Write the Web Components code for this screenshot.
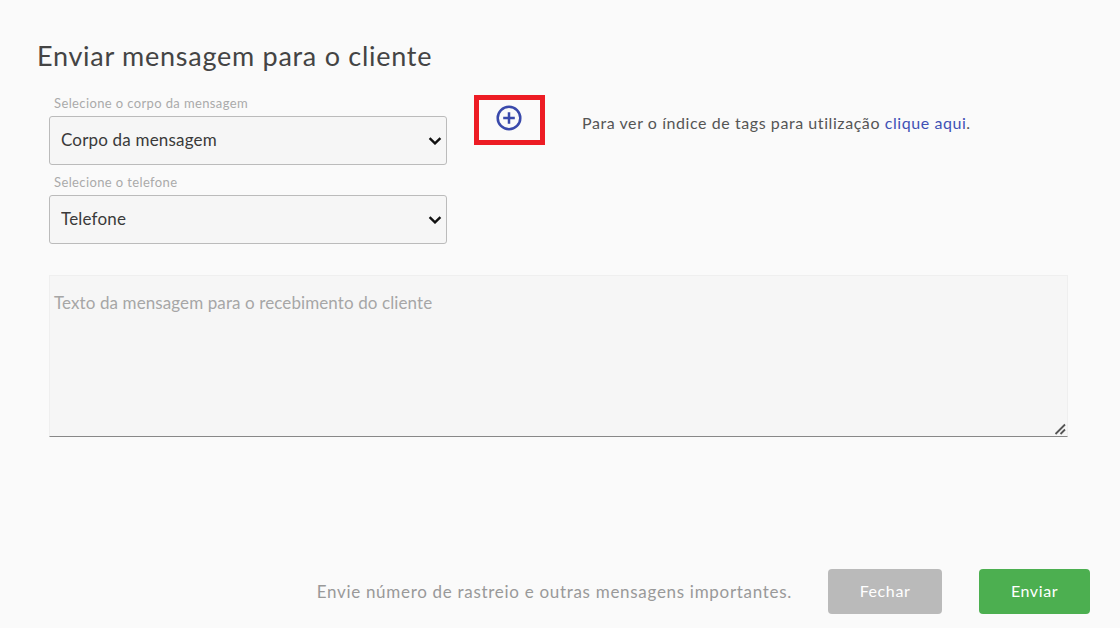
<!DOCTYPE html>
<html lang="pt">
<head>
<meta charset="utf-8">
<title>Enviar mensagem</title>
<style>
html, body { margin: 0; height: 100%; background: #fafafa; overflow: hidden; }
body { font-family: Lato, "Noto Sans", sans-serif; }
a { color: #3f51b5; text-decoration: none; }
</style>
</head>
<body>
<send-message-dialog>
  <span slot="title">Enviar mensagem para o cliente</span>
  <labeled-select slot="selects" label="Selecione o corpo da mensagem" value="Corpo da mensagem"></labeled-select>
  <labeled-select slot="selects" label="Selecione o telefone" value="Telefone"></labeled-select>
  <add-button slot="add"></add-button>
  <span slot="hint">Para ver o índice de tags para utilização <a href="#">clique aqui</a>.</span>
  <span slot="note">Envie número de rastreio e outras mensagens importantes.</span>
  <action-button slot="actions" kind="close">Fechar</action-button>
  <action-button slot="actions" kind="send">Enviar</action-button>
</send-message-dialog>

<script>
class LabeledSelect extends HTMLElement {
    constructor() {
        super();
        this.attachShadow({mode: 'open'});
    }

    connectedCallback(){
        this.shadowRoot.innerHTML = `
        <style>
        :host { display: block; }
        label {
            display: block;
            height: 21px;
            line-height: 17px;
            padding-left: 5px;
            font-size: 13px;
            letter-spacing: .38px;
            color: #aaa;
        }
        .box { position: relative; }
        select {
            display: block;
            box-sizing: border-box;
            width: 398px;
            height: 49px;
            padding: 0 11px 2px;
            font: 17px Lato, "Noto Sans", sans-serif;
            letter-spacing: .18px;
            color: #3a3a3a;
            background-color: #f6f6f6;
            border: 1px solid #bbb;
            border-radius: 3px;
            appearance: none;
            outline: none;
        }
        svg {
            position: absolute;
            top: 21px;
            right: 5px;
            pointer-events: none;
        }
        </style>
        <label>${this.getAttribute('label')}</label>
        <div class="box">
            <select><option>${this.getAttribute('value')}</option></select>
            <svg width="14" height="8" viewBox="0 0 14 8" fill="none" stroke="#111" stroke-width="2.4">
                <path d="M1.6 1.2L7 6.4l5.4-5.2"/>
            </svg>
        </div>
        `;
    }
}
customElements.define('labeled-select', LabeledSelect);

class AddButton extends HTMLElement {
    constructor() {
        super();
        this.attachShadow({mode: 'open'});
    }

    connectedCallback(){
        this.shadowRoot.innerHTML = `
        <style>
        :host {
            display: flex;
            justify-content: center;
            box-sizing: border-box;
            width: 71px;
            height: 50px;
            padding: 5px 1px 0 0;
            border: 5px solid #ed1c24;
        }
        svg { display: block; }
        </style>
        <svg width="26" height="26" viewBox="0 0 26 26" fill="none" stroke="#3949ab" stroke-width="2.5">
            <circle cx="13" cy="13" r="11.3"/>
            <path d="M13 7.2v11.6M7.2 13h11.6"/>
        </svg>
        `;
    }
}
customElements.define('add-button', AddButton);

class ActionButton extends HTMLElement {
    constructor() {
        super();
        this.attachShadow({mode: 'open'});
    }

    connectedCallback(){
        this.shadowRoot.innerHTML = `
        <style>
        :host { display: block; }
        button {
            display: block;
            height: 45px;
            padding: 0 0 2px;
            border: none;
            border-radius: 4px;
            color: #fff;
            font: 16px Lato, "Noto Sans", sans-serif;
            letter-spacing: .6px;
        }
        :host([kind="close"]) button { width: 114px; background: #bababa; }
        :host([kind="send"]) button { width: 111px; background: #4caf50; }
        </style>
        <button><slot></slot></button>
        `;
    }
}
customElements.define('action-button', ActionButton);

class SendMessageDialog extends HTMLElement {
    constructor() {
        super();
        this.attachShadow({mode: 'open'});
    }

    connectedCallback(){
        this.shadowRoot.innerHTML = `
        <style>
        :host {
            display: block;
            box-sizing: border-box;
            height: 628px;
            padding-top: 38px;
            color: #444;
        }
        h2 {
            margin: 0 0 0 37px;
            height: 57px;
            font-size: 27px;
            line-height: 35px;
            font-weight: 400;
            letter-spacing: .73px;
            color: #444;
        }
        .top {
            display: flex;
            padding-left: 49px;
        }
        .selects {
            display: flex;
            flex-direction: column;
            gap: 9px;
            width: 398px;
        }
        .add { margin-left: 27px; }
        .hint {
            margin-left: 37px;
            padding-top: 18px;
            font-size: 16px;
            line-height: 20px;
            letter-spacing: .57px;
            color: #555;
        }
        .message {
            position: relative;
            width: 1019px;
            margin: 31px 0 0 49px;
        }
        textarea {
            display: block;
            box-sizing: border-box;
            width: 100%;
            height: 162px;
            padding: 16px 4px;
            font: 17px Lato, "Noto Sans", sans-serif;
            letter-spacing: .1px;
            background: #f6f6f6;
            border: 1px solid #efefef;
            border-bottom: 1px solid #888;
            outline: none;
            resize: none;
        }
        textarea::placeholder { color: #a6a6a6; }
        .grip {
            position: absolute;
            right: 2px;
            bottom: 2px;
            pointer-events: none;
        }
        footer {
            display: flex;
            align-items: center;
            justify-content: flex-end;
            margin-top: 132px;
            padding-right: 30px;
        }
        .note {
            margin-right: 36px;
            font-size: 17px;
            letter-spacing: .7px;
            color: #999;
        }
        .actions {
            display: flex;
            gap: 37px;
        }
        </style>
        <h2><slot name="title"></slot></h2>
        <div class="top">
            <div class="selects"><slot name="selects"></slot></div>
            <div class="add"><slot name="add"></slot></div>
            <div class="hint"><slot name="hint"></slot></div>
        </div>
        <div class="message">
            <textarea placeholder="Texto da mensagem para o recebimento do cliente"></textarea>
            <svg class="grip" width="12" height="12" viewBox="0 0 12 12" fill="none" stroke="#555" stroke-width="1.8">
                <path d="M1.5 11L11 1.5M6.5 11L11 6.5"/>
            </svg>
        </div>
        <footer>
            <div class="note"><slot name="note"></slot></div>
            <div class="actions"><slot name="actions"></slot></div>
        </footer>
        `;
    }
}
customElements.define('send-message-dialog', SendMessageDialog);
</script>
</body>
</html>
